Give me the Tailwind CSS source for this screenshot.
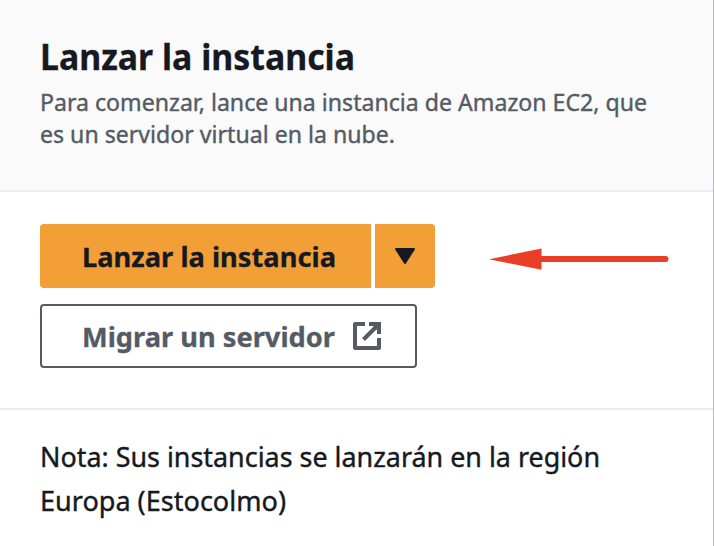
<!DOCTYPE html>
<html lang="es"><head><meta charset="utf-8"><script src="https://cdn.jsdelivr.net/npm/@tailwindcss/browser@4"></script></head>
<body class="w-[714px] h-[546px] overflow-hidden bg-white font-['Noto_Sans',sans-serif]">
<main class="h-full border-r border-[#b9bcbc] flex flex-col">
<header class="h-[192px] shrink-0 bg-[#fafafa] border-b-2 border-[#eaeded] px-10 pt-[34px]">
<h1 class="text-[36px] leading-[48px] font-bold text-[#16191f] whitespace-nowrap"><svg class="block overflow-visible" width="315" height="48"><text x="0" y="36" textLength="315" lengthAdjust="spacingAndGlyphs" fill="#16191f" stroke="#16191f" stroke-width="0.3">Lanzar la instancia</text></svg></h1>
<p class="mt-1 text-[24px] text-[#545b64]"><svg class="block overflow-visible" width="608" height="64" fill="#545b64" stroke="#545b64" stroke-width="0.4"><text x="0" y="25" textLength="607" lengthAdjust="spacingAndGlyphs">Para comenzar, lance una instancia de Amazon EC2, que</text><text x="0" y="57" textLength="355" lengthAdjust="spacingAndGlyphs">es un servidor virtual en la nube.</text></svg></p>
</header>
<section class="h-[218px] shrink-0 border-b-2 border-[#eaeded] px-10 pt-8">
<div class="flex items-center">
<div class="flex gap-1"><button class="w-[331px] h-16 bg-[#f29f38] rounded-l-[4px] pl-[42px]"><svg class="block overflow-visible text-[27.5px] font-bold" width="254" height="64"><text y="43" textLength="254" lengthAdjust="spacingAndGlyphs" fill="#16191f" stroke="#16191f" stroke-width="0.3">Lanzar la instancia</text></svg></button>
<button class="w-[60px] h-16 bg-[#f29f38] rounded-r-[4px]"><svg width="60" height="64"><path d="M21 25H39L30 39Z" fill="#16191f" stroke="#16191f" stroke-width="2" stroke-linejoin="round"/></svg></button></div>
<svg class="ml-[54px] mt-1.5" width="181" height="30" viewBox="489 245 181 30"><path d="M541 260H665.5" stroke="#e93f27" stroke-width="6" stroke-linecap="round"/><path d="M489 260.2L541.5 249.5V270.7Z" fill="#e93f27"/></svg></div>
<button class="mt-4 w-[377px] h-16 border-2 border-[#545b64] rounded-[4px] pl-10 flex items-center gap-[17px]"><svg class="overflow-visible text-[27.5px] font-bold" width="253" height="60"><text y="41" textLength="253" lengthAdjust="spacingAndGlyphs" fill="#545b64" stroke="#545b64" stroke-width="0.3">Migrar un servidor</text></svg><svg width="30" height="30" fill="none" stroke="#545b64" stroke-width="4" stroke-linejoin="round"><path d="M13 3H3V27H27V17"/><path d="M25 5L11.5 18.5"/><path d="M17 1H29V13H25V9L21 5H17Z" fill="#545b64" stroke="none"/></svg></button>
</section>
<footer class="px-10 pt-[25px] text-[28px]"><svg class="block overflow-visible" width="560" height="88" fill="#16191f" stroke="#16191f" stroke-width="0.4"><text y="32" textLength="560" lengthAdjust="spacingAndGlyphs">Nota: Sus instancias se lanzarán en la región</text><text y="76" textLength="246" lengthAdjust="spacingAndGlyphs">Europa (Estocolmo)</text></svg></footer>
</main></body></html>
